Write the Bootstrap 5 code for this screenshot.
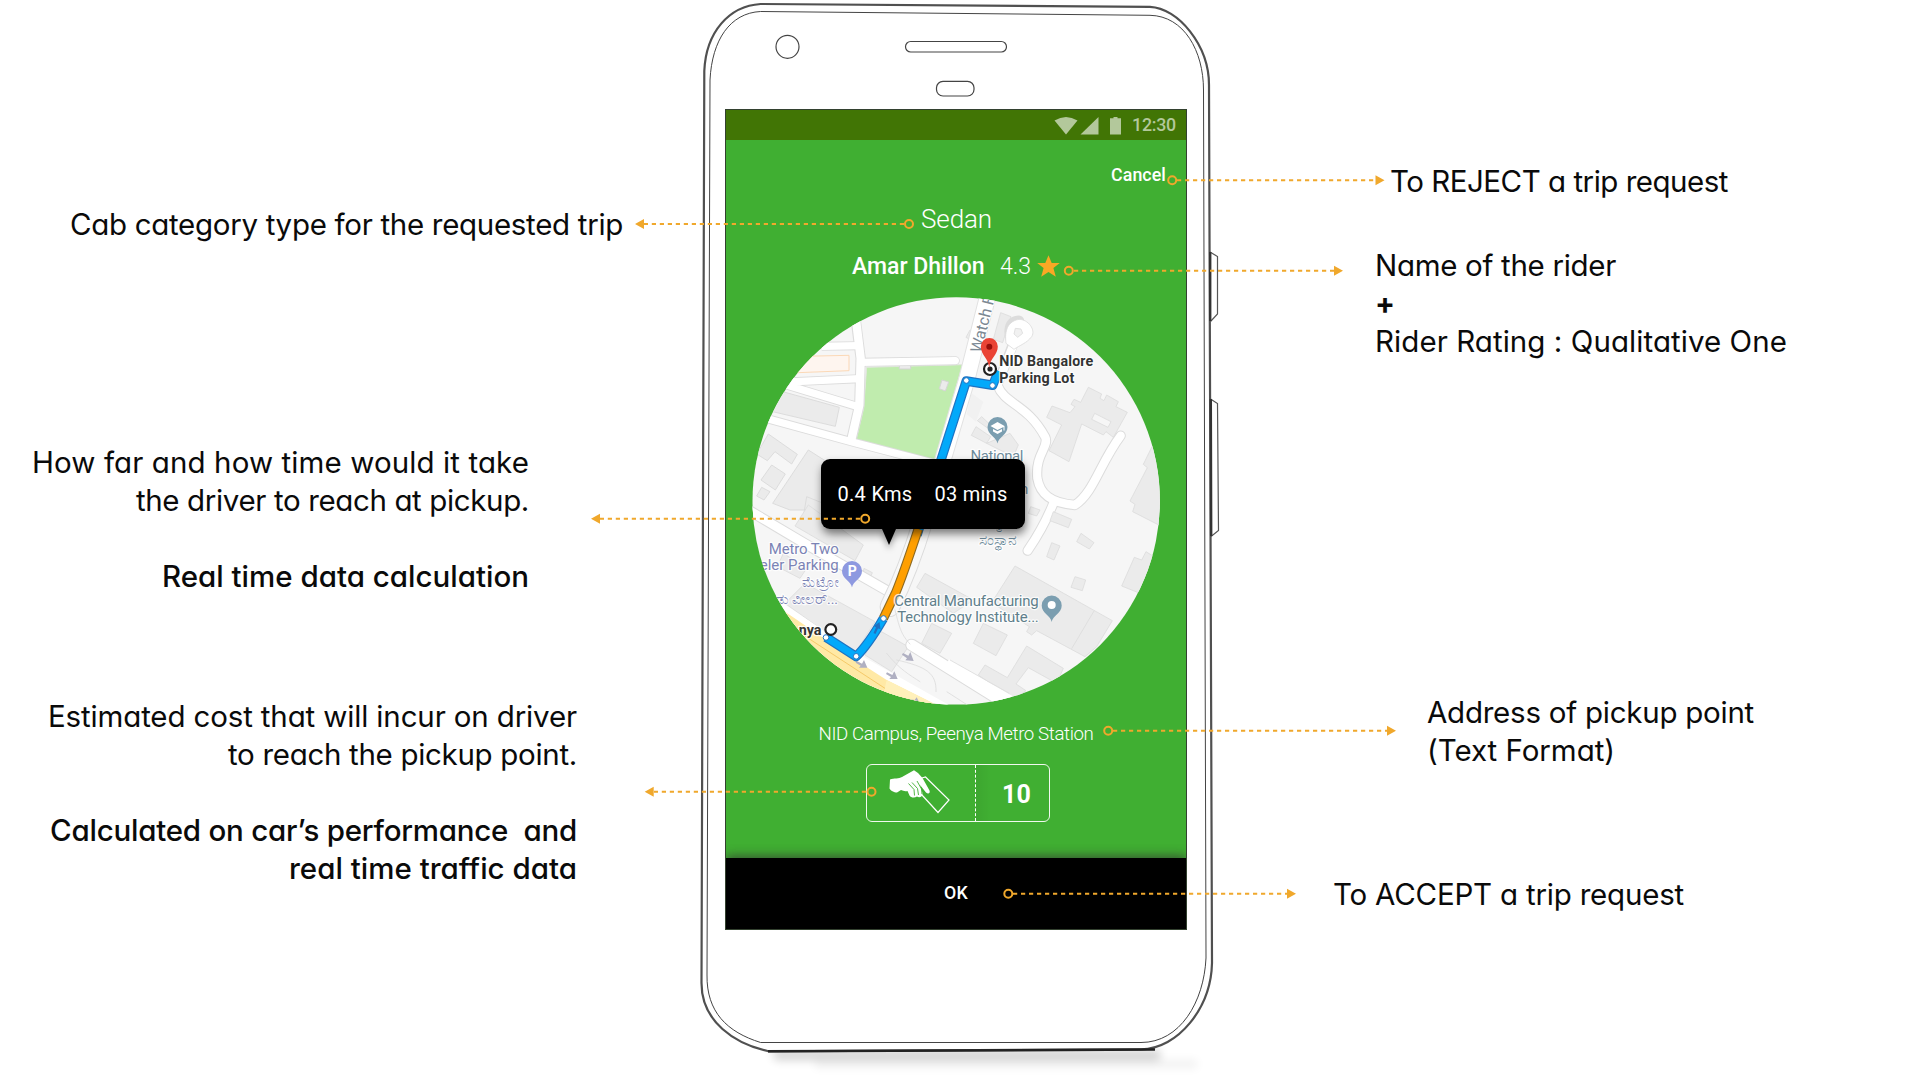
<!DOCTYPE html>
<html lang="en">
<head>
<meta charset="utf-8">
<meta name="viewport" content="width=device-width, initial-scale=1">
<title>Trip request screen</title>
<link href="https://cdn.jsdelivr.net/npm/bootstrap@5.3.0/dist/css/bootstrap.min.css" rel="stylesheet">
<style>
  body { background: #fff; color: #0a0a0a; overflow: hidden; }
  .board { width: 1920px; height: 1080px; }
  .note-col-left { width: 703px; padding-top: 204.5px; }
  .phone-col { width: 514px; padding: 109px 0 0 22px; font-family: Roboto, "Liberation Sans", sans-serif; }
  .note-col-right { width: 703px; padding-top: 162px; }
  .note { font-family: Inter, Lato, "Liberation Sans", sans-serif; font-feature-settings: "cv11"; font-size: 29.5px; line-height: 38px; white-space: pre; }
  .note b { font-weight: 500; }
  .note b.plus { font-weight: 700; }
  .n-cab { margin: 0 80px 200.5px 0; }
  .n-time { margin: 0 174px 102px 0; }
  .n-cost { margin: 0 126px 0 0; }
  .n-reject { margin: 0 0 45.5px 173px; }
  .n-rider { margin: 0 0 333px 158px; }
  .n-address { margin: 0 0 106.5px 210px; }
  .n-accept { margin-left: 116px; }
  .phone-art, .callouts { left: 0; top: 0; pointer-events: none; }
  .screen { width: 462px; height: 821px; background: #40af32; border: 1px solid #33412f; }
  .status { height: 30px; background: #417505; color: #b3c89b; padding-right: 10px; font-size: 17.8px; font-weight: 500; }
  .cancel { margin: 24.8px 20px 0 0; font-size: 17.8px; line-height: 20px; font-weight: 500; }
  .cab-type { margin: 19px 0 0 1px; font-size: 26px; line-height: 30px; font-weight: 300; }
  .rider { margin: 19px 0 0 126px; font-size: 23px; line-height: 28px; height: 28px; }
  .rider-name { font-weight: 500; margin-right: 15.5px; }
  .rider-score { font-weight: 300; margin-right: 6px; }
  .map { margin: 16.3px 0 0 25.5px; width: 408px; height: 408px; }
  .tip { left: 117.5px; top: 458.800px; width: 204px; height: 70.5px; border-radius: 9px; background: #000; font-size: 20px; box-shadow: 1px 5px 8px rgba(0,0,0,.5); padding: 0 17px; }
  .tip::after { content: ""; position: absolute; left: 61.5px; top: 70px; border: 7.5px solid transparent; border-top: 16px solid #000; border-bottom: 0; filter: drop-shadow(0 4px 3px rgba(0,0,0,.35)); }
  .address { margin-top: 18.3px; font-size: 18.7px; line-height: 22px; font-weight: 300; }
  .ticket { margin: 18.5px 0 0 139.5px; width: 184px; height: 58px; border: 1.5px solid #f0f8ee; border-radius: 6px; }
  .ticket-art { width: 109px; border-right: 1.5px dashed #fff; }
  .ticket-fare { font-size: 25px; font-weight: 700; padding: 3px 0 0 9px; background: linear-gradient(90deg, rgba(0,0,0,.05), transparent 15px); }
  .ok-bar { height: 71px; background: #000; font-size: 17.8px; font-weight: 500; box-shadow: 0 -2px 10px rgba(50,50,50,.75); clip-path: inset(-14px 0 0 0); }
</style>
<script src="https://cdn.jsdelivr.net/npm/bootstrap@5.3.0/dist/js/bootstrap.bundle.min.js"></script>
</head>
<body>
<main class="board d-flex position-relative">

  <!-- phone body outline -->
  <svg class="phone-art position-absolute" width="1920" height="1080" viewBox="0 0 1920 1080" fill="none">
    <defs>
      <filter id="soft" x="-10%" y="-100%" width="120%" height="300%"><feGaussianBlur stdDeviation="5"/></filter>
    </defs>
    <path d="M772 1050H1160V1060H775Z" fill="#000" opacity=".18" filter="url(#soft)"/>
    <path d="M815 1060H1197V1068H815Z" fill="#000" opacity=".06" filter="url(#soft)"/>
    <path d="M760.6 4L1150 6.800C1178 8 1209 45 1209 85L1212 963C1211 1008 1178 1049 1141 1049.300L768.500 1051.300C735 1044 701.500 1022 701.500 983L704.300 71C706 32 729 6 760.600 4Z" fill="#fff" stroke="#505050" stroke-width="2.200"/>
    <path d="M768 1051.300L1155 1049.600" stroke="#222" stroke-width="2.500"/>
    <path d="M760.600 11.500L1150 15.300C1184 16 1203.500 51 1203.500 90L1206 958C1204 1002 1180 1042.500 1141 1042.500H760.600C727 1032 706.500 1012 707 975L710 80C712 40 730 13 760.600 11.500Z" stroke="#444" stroke-width="1"/>
    <circle cx="787.500" cy="46.800" r="11.500" stroke="#444" stroke-width="1.200"/>
    <rect x="905.500" y="41.500" width="101" height="10.500" rx="5.200" stroke="#444" stroke-width="1.200"/>
    <rect x="936.500" y="81.300" width="37.500" height="14.700" rx="6.500" stroke="#444" stroke-width="1.200"/>
    <path d="M1210 252L1217.500 256.500V314L1210.500 321.500M1210.500 399L1217.500 403.500L1218.500 530.500L1211 536.500" stroke="#555" stroke-width="1.200"/>
    <path d="M1210.200 252V321M1210.800 399L1211.200 536" stroke="#333" stroke-width="2.400"/>
  </svg>

  <!-- driver-side notes -->
  <section class="note-col-left d-flex flex-column align-items-end text-end position-relative">
    <div class="note n-cab"><span data-w="553">Cab category type for the requested trip</span></div>
    <div class="note n-time"><span data-w="497">How far and how time would it take</span>
<span data-w="393">the driver to reach at pickup.</span>

<b data-w="367">Real time data calculation</b></div>
    <div class="note n-cost"><span data-w="529">Estimated cost that will incur on driver</span>
<span data-w="349">to reach the pickup point.</span>

<b data-w="527">Calculated on car’s performance  and</b>
<b data-w="288">real time traffic data</b></div>
  </section>

  <!-- phone screen -->
  <section class="phone-col position-relative">
    <div class="screen text-white d-flex flex-column">
      <div class="status d-flex align-items-center justify-content-end flex-shrink-0">
        <svg class="me-2 mt-1" width="70" height="20" viewBox="0 0 70 20" fill="#b3c89b">
          <path d="M0.500 3.500Q12 -3.500 23.500 3.500L12 17.500Z"/><path d="M44.500 0V17.500H26.500Z"/><path d="M56 1.200H59.500V-.2H63.500V1.200H67V17.500H56Z"/>
        </svg>
        <span data-w="44">12:30</span>
      </div>
      <div class="cancel text-end"><span data-w="55">Cancel</span></div>
      <div class="cab-type text-center"><span data-w="71">Sedan</span></div>
      <div class="rider d-flex align-items-center">
        <span class="rider-name" data-w="132.500">Amar Dhillon</span><span class="rider-score" data-w="31">4.3</span>
        <svg width="23" height="23" viewBox="0 0 23 23" fill="#f9a825"><path d="M11.500 .3L14.700 8H22.800L16.400 13L18.800 21.800L11.500 16.900L4.200 21.800L6.600 13L.2 8H8.300Z"/></svg>
      </div>

      <div class="map position-relative flex-shrink-0">
        <svg class="d-block" width="408" height="408" viewBox="752 297 408 408" font-family='Roboto, "Noto Sans", sans-serif'>
          <defs><clipPath id="lens"><circle cx="956.200" cy="500.900" r="203.700"/></clipPath></defs>
          <g clip-path="url(#lens)">
            <rect x="752" y="297" width="408" height="408" fill="#f6f6f6"/>

            <!-- blocks, north-west -->
            <g transform="translate(740 290) scale(.33333)" stroke="#dcdcdc" stroke-width="3" fill="#ebebeb" stroke-linejoin="round">
              <path d="M380 232L668 224L585 510L348 452L371 355Z" fill="#c0ecae" stroke="#e0e6dc"/>
              <path d="M478 221H512V237H478ZM606 270L626 276L616 303L598 296Z" stroke="#d5d5d5"/>
              <path d="M130 200L327 196V242L150 249Z" fill="#fef5ef" stroke="#fbd8b6"/>
              <path d="M110 300L298 352L286 409L85 362Z"/>
              <path d="M85 432L172 493L155 522L105 485L82 512L50 492ZM95 525L136 552L106 600L63 570ZM205 480L260 515V660H150L98 640Z"/>
              <path d="M65 592L90 605L72 630L50 618ZM200 620L250 640V680H190Z"/>
              <path d="M348 95L362 205L358 345L332 458" fill="none" stroke-width="31"/>
              <path d="M362 217L646 212" fill="none" stroke-width="27" stroke-linecap="round"/>
              <path d="M245 169L356 167M120 277L358 266M110 276L360 352M60 380L345 458L620 530" fill="none" stroke-width="27"/>
              <g fill="none" stroke="#fff">
                <path d="M348 90L362 205L358 345L332 458" stroke-width="25"/>
                <path d="M362 217L646 212" stroke-width="22" stroke-linecap="round"/>
                <path d="M245 169L356 167M120 277L358 266M110 276L360 352M60 380L345 458L620 530" stroke-width="22"/>
              </g>
            </g>

            <!-- blocks, north-east -->
            <g transform="translate(950 290) scale(.33333)" stroke="#dcdcdc" stroke-width="2.500" fill="#ebebeb" stroke-linejoin="round">
              <path d="M152 68L183 80L158 158L130 148ZM60 120L78 128L66 152L48 142ZM78 410L122 440L110 460L64 436ZM95 380L125 408L118 418L82 392ZM180 430L205 465L190 500L110 460Z"/>
              <path d="M65 310L100 335L78 395L50 372Z" fill="#f1f1f1" stroke="none"/>
              <path d="M415 292L455 312L450 325L462 332L470 315L505 335L498 350L532 367L490 442L468 425L460 435L395 402L357 515L297 482L335 405L290 382L306 348L360 368L375 350L363 343L372 328L392 337Z"/>
              <path d="M434 370L483 395L474 412L425 388Z" fill="#f6f6f6"/>
              <path d="M606 470L580 523L592 533L540 633L555 643L548 665L640 712V470Z"/>
              <g fill="none" stroke-linecap="round" stroke-linejoin="round">
                <path d="M118 0L50 270L-60 640" stroke-width="52" stroke="#e2e2e2"/>
                <path d="M207 92C170 92 175 140 190 160L142 285C165 345 230 340 285 440C300 470 255 490 262 565C270 610 300 640 375 645C430 610 450 520 512 437M310 640C290 690 265 735 233 782" stroke-width="31"/>
                <path d="M118 0L50 270L-60 640" stroke="#fff" stroke-width="46"/>
                <path d="M190 165L142 285C165 345 230 340 285 440C300 470 255 490 262 565C270 610 300 640 375 645C430 610 450 520 512 437M310 640C290 690 265 735 233 782" stroke="#fff" stroke-width="25"/>
              </g>
              <path d="M207 88C235 88 258 120 245 140C230 160 210 165 192 178L168 160C165 135 165 95 207 88Z" fill="#fff"/>
              <path d="M196 115L213 117L218 130L203 142L192 132Z" fill="#f1f1f1"/>
            </g>

            <!-- blocks, south-west -->
            <g transform="translate(740 500) scale(.33333)" stroke="#dcdcdc" stroke-width="2.500" fill="#ebebeb" stroke-linejoin="round">
              <path d="M205 15L370 135L345 182L165 78ZM195 250L405 365L348 455L250 392L135 310ZM415 390L505 440L455 515L375 465ZM555 220L700 300L640 340L530 262ZM575 370L635 400L600 460L545 430ZM130 160L200 205L180 235L112 200ZM372 205L397 218L390 235L368 222Z"/>
              <path d="M100 290L360 465L760 690L560 720L80 350Z" fill="#fff" stroke="none"/>
              <path d="M120 325L350 482L440 540L610 625L500 680L60 370Z" fill="#ffe9a5" stroke="none"/>
              <path d="M440 540L610 625H420Z" fill="#fff0ba" stroke="none"/>
              <path d="M190 405L435 565" stroke="#f3c35d" fill="none"/>
              <g fill="none" stroke-linecap="round">
                <path d="M25 30L190 128L455 280" stroke-width="33"/>
                <path d="M515 435L780 600" stroke-width="38"/>
                <path d="M25 30L190 128L455 280" stroke="#fff" stroke-width="27"/>
                <path d="M515 435L780 600" stroke="#fff" stroke-width="32"/>
                <path d="M550 60C520 160 495 230 450 320" stroke-width="62"/>
                <path d="M550 60C520 160 495 230 450 320" stroke="#f8f8f8" stroke-width="56"/>
                <path d="M465 330C480 390 485 405 510 432M470 480C560 500 590 520 588 575M440 460C480 510 510 525 540 545"/>
              </g>
              <g fill="#b0b0c2" stroke="none">
                <path d="M350 483L366 491L372 480L382 503L357 503L362 497L347 488ZM441 517L457 525L463 514L473 537L448 537L453 531L438 522ZM489 459L505 467L511 456L521 483L496 481L501 475L486 464ZM508 597L524 600L530 592L540 612L510 605Z"/>
              </g>
            </g>

            <!-- blocks, south-east -->
            <g transform="translate(950 500) scale(.33333)" stroke="#dcdcdc" stroke-width="2.500" fill="#ebebeb" stroke-linejoin="round">
              <path d="M195 198L487 362L440 440L405 470L260 392L245 405L230 395L238 380L125 308Z"/>
              <path d="M432 333L365 446" fill="none"/>
              <path d="M100 370L172 405L138 467L70 430ZM230 438L340 505L320 550L235 503L198 552L228 572L190 600L85 525L105 495L172 533ZM375 230L407 240L397 272L363 262ZM393 100L432 128L418 147L380 125ZM305 128L330 138L312 180L290 170ZM310 35L365 58L355 83L300 62ZM242 20L270 30L260 48L235 40ZM553 172L575 180L588 155L604 165L640 190L565 278L515 258Z"/>
              <path d="M-10 490L180 600" stroke="#fff" stroke-width="28"/>
              <path d="M0 480L178 580M-10 575L60 620" fill="none"/>
            </g>

            <!-- route -->
            <g fill="none" stroke-linejoin="round">
              <path d="M998.500 371L992.700 385.300L966.300 381L917 535" stroke="#1f73c2" stroke-width="9.500"/>
              <path d="M998.500 371L992.700 385.300L966.300 381L917 535" stroke="#03a9fa" stroke-width="7.200"/>
              <path d="M918.300 529Q903 575 896 592L883.300 618.500" stroke="#8d6a22" stroke-width="9.500"/>
              <path d="M918.300 529Q903 575 896 592L883.300 618.500" stroke="#ff9f00" stroke-width="7.200"/>
              <path d="M883.300 618.500Q868 645 856 656.500L826 637.300" stroke="#1f73c2" stroke-width="9.500"/>
              <path d="M883.300 618.500Q868 645 856 656.500L826 637.300" stroke="#03a9fa" stroke-width="7.200"/>
            </g>
            <path d="M879.500 622L880.500 629L878 628.500L875.500 634L873.500 633L876 627.500L874 626Z" fill="#1f6fc0"/>
            <g fill="#fff" stroke="#1f73c2" stroke-width="1">
              <circle cx="966.300" cy="380.500" r="2.800"/><circle cx="992.500" cy="385.500" r="2.800"/><circle cx="883.500" cy="618.500" r="2.800"/><circle cx="856.200" cy="656.300" r="2.800"/><circle cx="826" cy="637.500" r="2.800"/>
            </g>
            <circle cx="830.800" cy="629.500" r="5.400" fill="#fff" stroke="#222" stroke-width="2.200"/>
            <circle cx="990" cy="369" r="6" fill="#fff" stroke="#222" stroke-width="2.200"/><circle cx="990" cy="369" r="2.600" fill="#222"/>

            <!-- labels -->
            <g stroke="#fff" stroke-width="2.500" stroke-linejoin="round" paint-order="stroke" stroke-opacity=".8">
              <text transform="translate(981 353.500) rotate(-76)" font-size="16" fill="#7b8893">Watch Fa</text>
              <g font-size="14.300" font-weight="700" fill="#333">
                <text x="999.300" y="366" textLength="94">NID Bangalore</text><text x="999.300" y="383" textLength="75">Parking Lot</text>
                <text x="821.500" y="635" text-anchor="end">nya</text>
              </g>
              <g font-size="15" fill="#6e8c9c">
                <text x="970.500" y="461" textLength="53">National</text><text x="1020" y="494">n</text>
                <text x="979" y="545" font-size="13.500" textLength="38" lengthAdjust="spacingAndGlyphs">ಸಂಸ್ಥಾನ</text><text x="996" y="532" font-size="12">ತಿ</text>
              </g>
              <g font-size="15" fill="#607f8b">
                <text x="894.300" y="605.700" textLength="144.500">Central Manufacturing</text><text x="897.300" y="622.300" textLength="141.500">Technology Institute...</text>
              </g>
              <g font-size="15" fill="#7b83b5">
                <text x="768.700" y="553.700" textLength="70">Metro Two</text><text x="838.700" y="570.300" text-anchor="end">eler Parking</text>
                <text x="802" y="587" font-size="13.500" textLength="37" lengthAdjust="spacingAndGlyphs">ಮೆಟ್ರೋ</text><text x="775" y="604" font-size="13.500" textLength="63" lengthAdjust="spacingAndGlyphs">ಡು ವೀಲರ್...</text>
              </g>
            </g>

            <!-- pins -->
            <path d="M989.200 368C988.500 358 980.800 355 980.800 346.500A8.500 8.500 0 0 1 997.800 346.500C997.800 355 990 358 989.200 368Z" fill="#ea4335"/><circle cx="989.300" cy="346.800" r="3" fill="#960e0a"/>
            <path d="M997.500 443.500C996.500 437 987.500 435 987.500 427A10 10 0 0 1 1007.500 427C1007.500 435 998.500 437 997.500 443.500Z" fill="#7b9eb0"/>
            <path d="M990.500 426L997.500 422L1004.500 426V430.500H1003.500V427L997.500 430ZM993 429L997.500 431.300L1002 429V431.500L997.500 434L993 431.500Z" fill="#fff"/>
            <path d="M852 587.500C851 581 842 579 842 571A10 10 0 0 1 862 571C862 579 853 581 852 587.500Z" fill="#8e99e0"/>
            <text x="852.200" y="575.800" font-size="14" font-weight="700" fill="#fff" text-anchor="middle">P</text>
            <path d="M1051.700 622C1050.700 615.500 1041.700 613.500 1041.700 605.500A10 10 0 0 1 1061.700 605.500C1061.700 613.500 1052.700 615.500 1051.700 622Z" fill="#7b9eb0"/><circle cx="1051.700" cy="605" r="4" fill="#fff"/>
          </g>
        </svg>
      </div>

      <div class="address text-center"><span data-w="275">NID Campus, Peenya Metro Station</span></div>
      <div class="ticket d-flex flex-shrink-0">
        <div class="ticket-art">
          <svg width="106" height="55" viewBox="867 766 106 55" fill="none">
            <path d="M921.500 795.500L938 813.500L949 801L925.500 778L922 779" stroke="#fff" stroke-width="1.200"/>
            <path d="M890 780.500C894 779 899 780 902 778L914 771.200L918 774L922.500 779L929.500 791.500C930.500 794.500 928 795.500 926 793.500L920 786L922.500 794C923 798 919 799 917 797.500C915 799 911 799 909.500 796.500L907.500 792C905 792.500 903 792 901 791L897 793.500C894 793.500 890.500 791.500 889.500 789.500Z" fill="#fff"/>
            <path d="M912 783.500L917.500 789.500L918.500 796M908.500 784.500L914 790.500L914.500 796.500M917 782L921.500 790L922 795" stroke="#40af32" stroke-width=".9"/>
          </svg>
        </div>
        <div class="ticket-fare flex-grow-1 d-flex align-items-center justify-content-center"><span data-w="29">10</span></div>
      </div>
      <div class="ok-bar mt-auto d-flex align-items-center justify-content-center flex-shrink-0"><span data-w="24">OK</span></div>

    </div>
    <div class="tip text-white position-absolute d-flex align-items-center justify-content-between"><span data-w="75">0.4 Kms</span><span data-w="73">03 mins</span></div>
  </section>

  <!-- rider-side notes -->
  <section class="note-col-right d-flex flex-column align-items-start position-relative">
    <div class="note n-reject"><span data-w="338">To REJECT a trip request</span></div>
    <div class="note n-rider"><span data-w="241">Name of the rider</span>
<b class="plus">+</b>
<span data-w="412">Rider Rating : Qualitative One</span></div>
    <div class="note n-address"><span data-w="327">Address of pickup point</span>
<span data-w="188">(Text Format)</span></div>
    <div class="note n-accept"><span data-w="351">To ACCEPT a trip request</span></div>
  </section>

  <!-- dotted leaders from screen elements to their notes -->
  <svg class="callouts position-absolute" width="1920" height="1080" viewBox="0 0 1920 1080" fill="none" stroke="#f0a82c" stroke-width="2">
    <g stroke-dasharray="4.200 3.800">
      <path d="M1177 180.300H1376M904 224H644M1074 270.700H1334M860 518.800H600M1113 730.800H1387M866 791.800H654M1013 893.700H1287"/>
    </g>
    <g>
      <circle cx="1172.200" cy="180.300" r="4"/><circle cx="909" cy="224" r="4"/><circle cx="1068.800" cy="270.700" r="4"/><circle cx="865.200" cy="518.800" r="4"/><circle cx="1108.200" cy="730.800" r="4"/><circle cx="871.500" cy="791.800" r="4"/><circle cx="1008.300" cy="893.700" r="4"/>
    </g>
    <path fill="#f0a82c" stroke="none" d="M1384.500 180.300l-9-5v10zM635 224l9-5v10zM1343 270.700l-9-5v10zM591 518.800l9-5v10zM1396 730.800l-9-5v10zM644.700 791.800l9-5v10zM1296 893.700l-9-5v10z"/>
  </svg>
</main>
<script>
  document.querySelectorAll('[data-w]').forEach(function (el) {
    var n = el.textContent.length;
    var gap = (parseFloat(el.dataset.w) - el.getBoundingClientRect().width) / n;
    el.style.letterSpacing = gap.toFixed(3) + 'px';
  });
</script>
</body>
</html>
